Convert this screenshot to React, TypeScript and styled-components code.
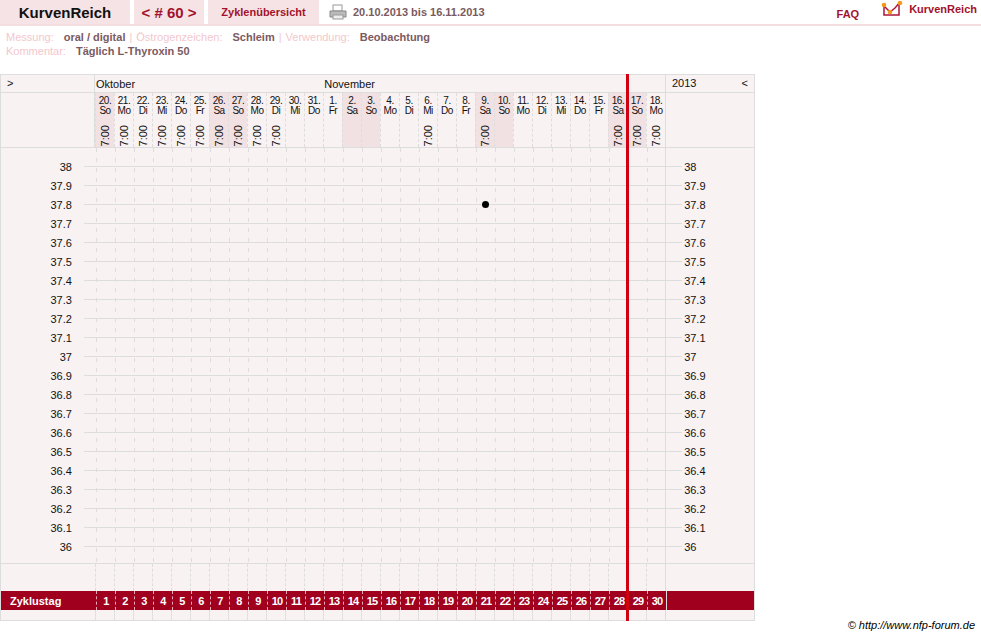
import React from "react";
import styled, { createGlobalStyle } from "styled-components";

const GlobalStyle = createGlobalStyle`
  body { margin: 0; font-family: "Liberation Sans", Arial, sans-serif; background: #fff; }
`;

const COL = 19;
const days = [
  ["20.", "So", 1, 1], ["21.", "Mo", 0, 1], ["22.", "Di", 0, 1], ["23.", "Mi", 0, 1],
  ["24.", "Do", 0, 1], ["25.", "Fr", 0, 1], ["26.", "Sa", 1, 1], ["27.", "So", 1, 1],
  ["28.", "Mo", 0, 1], ["29.", "Di", 0, 1], ["30.", "Mi", 0, 0], ["31.", "Do", 0, 0],
  ["1.", "Fr", 0, 0], ["2.", "Sa", 1, 0], ["3.", "So", 1, 0], ["4.", "Mo", 0, 0],
  ["5.", "Di", 0, 0], ["6.", "Mi", 0, 1], ["7.", "Do", 0, 0], ["8.", "Fr", 0, 0],
  ["9.", "Sa", 1, 1], ["10.", "So", 1, 0], ["11.", "Mo", 0, 0], ["12.", "Di", 0, 0],
  ["13.", "Mi", 0, 0], ["14.", "Do", 0, 0], ["15.", "Fr", 0, 0], ["16.", "Sa", 1, 1],
  ["17.", "So", 1, 1], ["18.", "Mo", 0, 1],
] as const;

const temps = Array.from({ length: 21 }, (_, i) => {
  const v = (380 - i) / 10;
  return Number.isInteger(v) ? String(v) : v.toFixed(1);
});

const TopBar = styled.div`
  display: flex;
  align-items: center;
  height: 24px;
  border-bottom: 2px solid #f3dde0;
  padding-right: 4px;
`;
const Tab = styled.div<{ $w: number; $bg?: boolean }>`
  width: ${(p) => p.$w}px;
  height: 24px;
  margin-right: 4px;
  display: flex;
  align-items: center;
  justify-content: center;
  background: ${(p) => (p.$bg ? "#f5e3e5" : "transparent")};
`;
const Brand = styled.span`
  font-size: 15px;
  font-weight: bold;
  color: #111;
`;
const Nav = styled.span`
  font-size: 15px;
  font-weight: bold;
  color: #a3122c;
`;
const TabLink = styled.span`
  font-size: 11px;
  font-weight: bold;
  color: #a3122c;
`;
const DateText = styled.span`
  font-size: 11px;
  font-weight: bold;
  color: #7b5a60;
  margin-left: 6px;
`;
const Spacer = styled.div`
  flex: 1;
`;
const Faq = styled.span`
  font-size: 11px;
  font-weight: bold;
  color: #a3122c;
  margin-right: 22px;
  margin-top: 4px;
`;
const Logo = styled.div`
  display: flex;
  align-items: center;
  gap: 6px;
  font-size: 11px;
  font-weight: bold;
  color: #a3122c;
  margin-top: -6px;
`;
const Info = styled.div`
  padding: 4px 6px 0;
  font-size: 11px;
  line-height: 14px;
`;
const Key = styled.span`
  color: #f3c7cc;
  margin-right: 8px;
`;
const Val = styled.span`
  font-weight: bold;
  color: #7b5a60;
  margin: 0 4px 0 2px;
`;
const Sep = styled.span`
  color: #f3c7cc;
  margin-right: 4px;
`;

const Chart = styled.div`
  position: relative;
  margin-top: 16px;
  width: 753px;
  border: 1px solid #ddd;
  background: #f8f2f2;
  font-size: 11px;
  color: #111;
`;
const Row = styled.div<{ $h: number; $line?: boolean }>`
  display: flex;
  height: ${(p) => p.$h}px;
  border-bottom: ${(p) => (p.$line ? "1px solid #ddd" : "none")};
`;
const Side = styled.div<{ $left?: boolean }>`
  width: ${(p) => (p.$left ? 94 : 89)}px;
  ${(p) => (p.$left ? "border-right: 1px solid #ddd;" : "border-left: 1px solid #ddd;")}
  display: flex;
  justify-content: space-between;
  padding: 2px 6px;
  box-sizing: border-box;
`;
const Plot = styled.div`
  display: flex;
  width: ${COL * 30}px;
`;
const MonthRow = styled.div`
  display: flex;
  width: ${COL * 30}px;
  padding-top: 3px;
`;
const Month = styled.span<{ $w: number }>`
  width: ${(p) => p.$w}px;
  padding-left: 1px;
`;
const DayCell = styled.div<{ $we: boolean }>`
  width: ${COL}px;
  background: ${(p) => (p.$we ? "#f1e1e3" : "transparent")};
  border-left: 1px dashed #ddd;
  box-sizing: border-box;
  display: flex;
  flex-direction: column;
  align-items: center;
  font-size: 10px;
  line-height: 10px;
  padding-top: 3px;
  letter-spacing: -0.5px;
`;
const Time = styled.span`
  writing-mode: vertical-rl;
  transform: rotate(180deg);
  margin-top: 9px;
  font-size: 11px;
  letter-spacing: 0;
`;
const Body = styled.div`
  display: flex;
  height: 415px;
  border-bottom: 1px solid #ddd;
`;
const LabelCol = styled.div<{ $left?: boolean }>`
  width: ${(p) => (p.$left ? 95 : 89)}px;
  ${(p) => (p.$left ? "" : "border-left: 1px solid #ddd;")}
  padding-top: 9px;
  box-sizing: border-box;
`;
const Label = styled.div<{ $left?: boolean }>`
  height: 19px;
  display: flex;
  align-items: center;
  flex-direction: ${(p) => (p.$left ? "row" : "row-reverse")};
  justify-content: flex-end;
  gap: 2px;
  font-size: 11px;
  &::after {
    content: "";
    width: ${(p) => (p.$left ? 12 : 16)}px;
    height: 1px;
    background: #ddd;
  }
`;
const LabelText = styled.span<{ $left?: boolean }>`
  ${(p) => (p.$left ? "margin-right: 10px;" : "width: 56px;")}
`;
const Grid = styled.svg`
  display: block;
`;
const Bar = styled.div`
  display: flex;
  height: 19px;
  background: #a0001e;
  color: #fff;
  font-size: 11px;
  font-weight: bold;
  align-items: center;
`;
const BarLabel = styled.div`
  width: 95px;
  padding-left: 9px;
  box-sizing: border-box;
`;
const BarCell = styled.div`
  width: ${COL}px;
  height: 19px;
  border-left: 1px dashed #e9a9b4;
  box-sizing: border-box;
  display: flex;
  align-items: center;
  justify-content: center;
  letter-spacing: -0.8px;
`;
const BarRest = styled.div`
  flex: 1;
  height: 19px;
  border-left: 1px solid #ddd;
`;
const DashCells = styled.div`
  display: flex;
  width: ${COL * 30}px;
`;
const Dash = styled.div`
  width: ${COL}px;
  border-left: 1px dashed #ddd;
  box-sizing: border-box;
`;
const RedLine = styled.div`
  position: absolute;
  top: -1px;
  bottom: -1px;
  left: ${95 + COL * 28 - 2}px;
  width: 3px;
  background: #d00010;
`;
const Copy = styled.div`
  text-align: right;
  font-size: 11px;
  font-style: italic;
  padding-right: 6px;
  margin-top: -2px;
`;

const EmptyRow = ({ h }: { h: number }) => (
  <Row $h={h}>
    <div style={{ width: 95 }} />
    <DashCells>{days.map((_, i) => <Dash key={i} />)}</DashCells>
    <Side />
  </Row>
);

export default function App() {
  const w = COL * 30;
  return (
    <>
      <GlobalStyle />
      <TopBar>
        <Tab $w={130} $bg><Brand>KurvenReich</Brand></Tab>
        <Tab $w={70} $bg><Nav>&lt; # 60 &gt;</Nav></Tab>
        <Tab $w={111} $bg><TabLink>Zyklenübersicht</TabLink></Tab>
        <svg width="18" height="16" viewBox="0 0 18 16" style={{ marginLeft: 6 }}>
          <rect x="4" y="1" width="9" height="6" fill="#fff" stroke="#999" />
          <path d="M1 7h16v6H1z" fill="#bbb" stroke="#888" />
          <rect x="4" y="11" width="10" height="4" fill="#eee" stroke="#999" />
        </svg>
        <DateText>20.10.2013 bis 16.11.2013</DateText>
        <Spacer />
        <Faq>FAQ</Faq>
        <Logo>
          <svg width="22" height="18" viewBox="0 0 22 18">
            <path d="M3 6v9h15V5" fill="none" stroke="#b0153a" strokeWidth="1.5" />
            <path d="M3 6l6 6 5-4 5-6" fill="none" stroke="#b0153a" strokeWidth="1.5" />
            <circle cx="3" cy="5" r="2.3" fill="#f29a1c" />
            <circle cx="9" cy="12" r="2.3" fill="#f29a1c" />
            <circle cx="19" cy="3" r="2.3" fill="#f29a1c" />
          </svg>
          KurvenReich
        </Logo>
      </TopBar>
      <Info>
        <Key>Messung:</Key><Val>oral / digital</Val><Sep>|</Sep>
        <Key>Östrogenzeichen:</Key><Val>Schleim</Val><Sep>|</Sep>
        <Key>Verwendung:</Key><Val>Beobachtung</Val>
        <br />
        <Key>Kommentar:</Key><Val>Täglich L-Thyroxin 50</Val>
      </Info>
      <Chart>
        <Row $h={17} $line>
          <Side $left>&gt;</Side>
          <MonthRow>
            <Month $w={COL * 12}>Oktober</Month>
            <Month $w={COL * 18}>November</Month>
          </MonthRow>
          <Side><span>2013</span><span>&lt;</span></Side>
        </Row>
        <Row $h={54} $line>
          <Side $left />
          <Plot>
            {days.map(([d, wd, we, t], i) => (
              <DayCell key={i} $we={!!we}>
                <span>{d}</span>
                <span>{wd}</span>
                {t ? <Time>7:00</Time> : null}
              </DayCell>
            ))}
          </Plot>
          <Side />
        </Row>
        <Body>
          <LabelCol $left>
            {temps.map((t) => (
              <Label key={t} $left><LabelText $left>{t}</LabelText></Label>
            ))}
          </LabelCol>
          <Grid width={w} height={415}>
            {days.map((_, i) => (
              <line key={i} x1={i * COL + 0.5} x2={i * COL + 0.5} y1={0} y2={415}
                stroke="#ddd" strokeDasharray="4 6" />
            ))}
            {temps.map((_, i) => (
              <line key={i} x1={0} x2={w} y1={18.5 + i * 19} y2={18.5 + i * 19} stroke="#ddd" />
            ))}
            <circle cx={20 * COL + 9.5} cy={18.5 + 2 * 19} r={3.5} fill="#000" />
          </Grid>
          <LabelCol>
            {temps.map((t) => (
              <Label key={t}><LabelText>{t}</LabelText></Label>
            ))}
          </LabelCol>
        </Body>
        <EmptyRow h={27} />
        <Bar>
          <BarLabel>Zyklustag</BarLabel>
          {days.map((_, i) => <BarCell key={i}>{i + 1}</BarCell>)}
          <BarRest />
        </Bar>
        <EmptyRow h={10} />
        <RedLine />
      </Chart>
      <Copy>© http://www.nfp-forum.de</Copy>
    </>
  );
}
